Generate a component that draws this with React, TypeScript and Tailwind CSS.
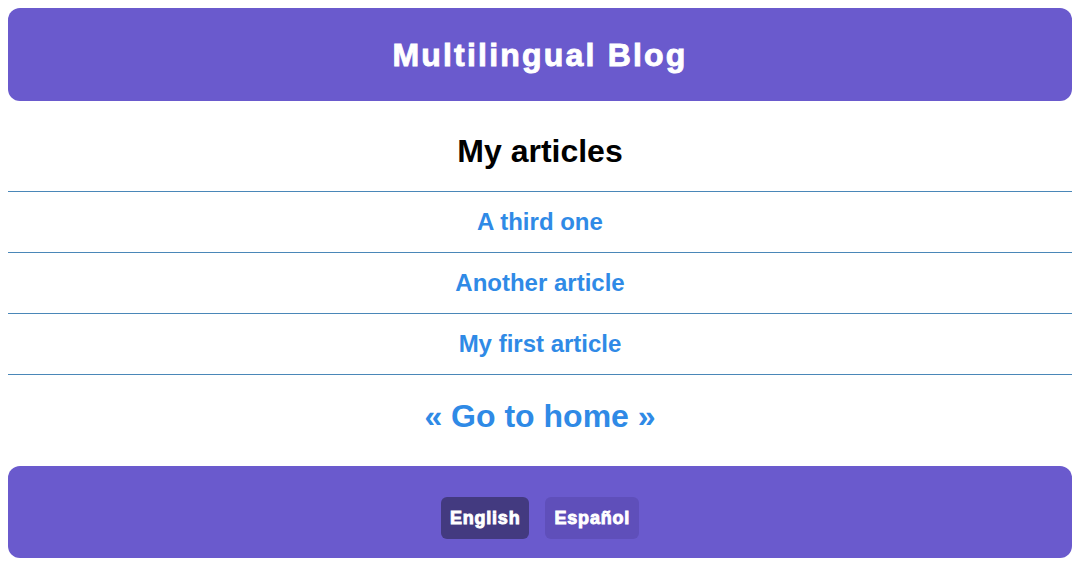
const articles = ['A third one', 'Another article', 'My first article'];

const heavy = '[-webkit-text-stroke:0.9px_white]';

export default function App() {
  return (
    <div className="min-h-[575px] bg-white p-2 font-['Liberation_Sans',Arial,sans-serif]">
      <header className="flex h-[93px] items-center justify-center rounded-xl bg-[#6a5acd]">
        <h1 className={`text-[32px] font-bold tracking-[2.2px] text-white ${heavy}`}>Multilingual Blog</h1>
      </header>

      <main>
        <div className="flex h-[90px] items-center justify-center pt-[10px]">
          <h2 className="text-[32px] font-bold text-black">My articles</h2>
        </div>
        <ul className="border-t border-[#4a87b8]">
          {articles.map((title) => (
            <li key={title} className="flex h-[61px] items-center justify-center border-b border-[#4a87b8]">
              <a href="#" className="text-2xl font-bold text-[#2f8ae6]">
                {title}
              </a>
            </li>
          ))}
        </ul>
        <div className="flex h-[91px] items-start justify-center pt-[17px]">
          <a href="#" className="text-[32px] font-bold text-[#2f8ae6]">
            « Go to home »
          </a>
        </div>
      </main>

      <footer className="flex h-[92px] items-start justify-center gap-4 rounded-xl bg-[#6a5acd] pt-[31px]">
        <button className={`h-[42px] rounded-md bg-[#433a80] px-[9px] text-lg font-bold tracking-[0.8px] text-white ${heavy}`}>
          English
        </button>
        <button className={`h-[42px] rounded-md bg-[#5f4fba] px-[9px] text-lg font-bold tracking-[0.8px] text-white ${heavy}`}>
          Español
        </button>
      </footer>
    </div>
  );
}
